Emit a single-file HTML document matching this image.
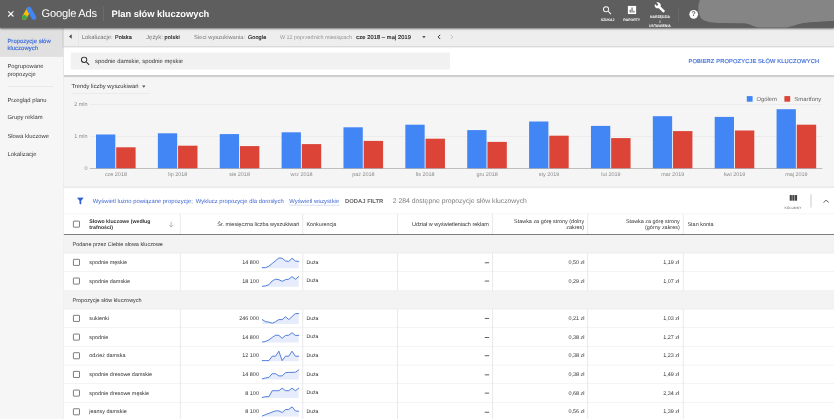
<!DOCTYPE html><html lang="pl"><head><meta charset="utf-8"><title>Plan słów kluczowych</title><style>
*{box-sizing:border-box;margin:0;padding:0}
html,body{width:834px;height:419px;overflow:hidden;background:#f1f1f1}
body{text-rendering:geometricPrecision;font-family:"Liberation Sans",sans-serif;color:#3c3c3c}
#w{position:absolute;left:0;top:0;width:1920px;height:965px;transform:scale(0.434375);transform-origin:0 0;background:#f1f1f1;overflow:hidden}
.a{position:absolute;white-space:nowrap}
.t{position:absolute;white-space:nowrap;line-height:1;transform:translateY(-50%)}
.r{text-align:right}
#hdr{left:0;top:0;width:1920px;height:64px;background:#5e5e5e;box-shadow:0 2px 4px rgba(0,0,0,.5)}
.w{color:#fff}
.lbl{font-size:8px;font-weight:bold;color:#fff;text-align:center;transform:translate(-50%,-50%);letter-spacing:0}
#side{left:0;top:64px;width:146px;height:901px;background:#f6f6f6;border-right:1.500px solid #e6e6e6}
.si{font-size:13.5px;color:#3c3c3c;line-height:17px;left:17px;position:absolute;white-space:nowrap}
#top{left:146px;top:64px;width:1774px;height:43px;background:#eeeeee;box-shadow:0 1px 3px rgba(0,0,0,.25)}
.g{color:#757575}
.d{color:#222}
.card{background:#fff}
.vl{position:absolute;width:1px;background:#e0e0e0}
.hl{position:absolute;height:1px;background:#e6e6e6}
.cb{position:absolute;width:16px;height:16px;border:2px solid #6a6a6a;border-radius:2px;background:#fff}
.row{font-size:12.5px;color:#333}
.hd{font-size:12.5px;color:#333}
.m{-webkit-text-stroke:0.35px currentColor}
</style></head><body><div id="w">
<div id="side" class="a">
<div class="a" style="left:0;top:0;width:146px;height:66.53px;background:#e0e0e0"></div>
<div class="si" style="top:21.9px;color:#3c6ddc;font-size:13.6px;letter-spacing:0.1px;-webkit-text-stroke:0.35px #3c6ddc">Propozycje słów</div>
<div class="si" style="top:38.9px;color:#3c6ddc;font-size:13.6px;letter-spacing:0.1px;-webkit-text-stroke:0.35px #3c6ddc">kluczowych</div>
<div class="si" style="top:80.4px;color:#3c3c3c">Pogrupowane</div>
<div class="si" style="top:96.5px;color:#3c3c3c">propozycje</div>
<div class="hl" style="left:18px;top:134px;width:104px;height:2px;background:#e6e6e6"></div>
<div class="si" style="top:156.6px;color:#3c3c3c">Przegląd planu</div>
<div class="si" style="top:197.8px;color:#3c3c3c">Grupy reklam</div>
<div class="si" style="top:239.7px;color:#3c3c3c">Słowa kluczowe</div>
<div class="si" style="top:280.9px;color:#3c3c3c">Lokalizacje</div>
</div>
<div class="a card" style="left:147px;top:107px;width:1773px;height:67px;box-shadow:0 1px 2px rgba(0,0,0,.2)"></div>
<div class="a" style="left:147px;top:174px;width:1773px;height:2px;background:#ababab"></div>
<div class="a" style="left:163.45px;top:120.86px;width:872.52px;height:39.36999999999999px;background:#f1f1f1;border-radius:2px"></div>
<svg class="a" style="left:183.33px;top:127.16px" width="27" height="27" viewBox="0 0 24 24"><path fill="#2a2a2a" d="M15.5 14h-.79l-.28-.27A6.47 6.47 0 0 0 16 9.5 6.5 6.5 0 1 0 9.5 16c1.61 0 3.09-.59 4.23-1.57l.27.28v.79l5 4.99L20.49 19l-4.99-5zm-6 0C7.01 14 5 11.99 5 9.500S7.010 5 9.500 5 14 7.010 14 9.500 11.990 14 9.500 14z"/></svg>
<div class="t" style="left:218.71px;top:140.43px;font-size:13.5px;color:#333">spodnie damskie, spodnie męskie</div>
<div class="t r" style="right:33.83999999999992px;top:140.43px;font-size:13.2px;letter-spacing:0.306px;-webkit-text-stroke:0.35px #3c6ddc;color:#3c6ddc">POBIERZ PROPOZYCJE SŁÓW KLUCZOWYCH</div>
<div class="a" style="left:147px;top:177.96px;width:1773px;height:252.54px;background:#f5f5f5;box-shadow:0 1px 1.500px rgba(0,0,0,.12)"></div>
<div class="t" style="left:164.6px;top:198.45px;font-size:13.45px;color:#333">Trendy liczby wyszukiwań</div>
<div class="a" style="left:327.47px;top:197.37px;width:0;height:0;border-left:4.5px solid transparent;border-right:4.5px solid transparent;border-top:5px solid #555"></div>
<div class="hl" style="left:164.6px;top:214.56px;width:180.72px;background:#dedede"></div>
<div class="a card" style="left:147px;top:432.58px;width:1773px;height:540px"></div>
<svg class="a" style="left:0;top:0" width="1920" height="964.6" viewBox="0 0 834 419">
<rect x="89.8" y="104.23" width="732.6" height="0.45" fill="#e3e3e3"/>
<rect x="89.8" y="136.38" width="732.6" height="0.45" fill="#e3e3e3"/>
<rect x="96.00" y="134.50" width="19.3" height="34.00" fill="#4285f4"/>
<rect x="116.20" y="147.30" width="19.4" height="21.20" fill="#db4437"/>
<rect x="157.87" y="133.30" width="19.3" height="35.20" fill="#4285f4"/>
<rect x="178.07" y="145.70" width="19.4" height="22.80" fill="#db4437"/>
<rect x="219.74" y="134.10" width="19.3" height="34.40" fill="#4285f4"/>
<rect x="239.94" y="146.10" width="19.4" height="22.40" fill="#db4437"/>
<rect x="281.61" y="132.30" width="19.3" height="36.20" fill="#4285f4"/>
<rect x="301.81" y="144.10" width="19.4" height="24.40" fill="#db4437"/>
<rect x="343.48" y="127.30" width="19.3" height="41.20" fill="#4285f4"/>
<rect x="363.68" y="140.90" width="19.4" height="27.60" fill="#db4437"/>
<rect x="405.35" y="124.70" width="19.3" height="43.80" fill="#4285f4"/>
<rect x="425.55" y="138.70" width="19.4" height="29.80" fill="#db4437"/>
<rect x="467.22" y="130.10" width="19.3" height="38.40" fill="#4285f4"/>
<rect x="487.42" y="141.90" width="19.4" height="26.60" fill="#db4437"/>
<rect x="529.09" y="121.50" width="19.3" height="47.00" fill="#4285f4"/>
<rect x="549.29" y="135.70" width="19.4" height="32.80" fill="#db4437"/>
<rect x="590.96" y="125.90" width="19.3" height="42.60" fill="#4285f4"/>
<rect x="611.16" y="138.10" width="19.4" height="30.40" fill="#db4437"/>
<rect x="652.83" y="116.20" width="19.3" height="52.30" fill="#4285f4"/>
<rect x="673.03" y="131.10" width="19.4" height="37.40" fill="#db4437"/>
<rect x="714.70" y="116.90" width="19.3" height="51.60" fill="#4285f4"/>
<rect x="734.90" y="130.50" width="19.4" height="38.00" fill="#db4437"/>
<rect x="776.57" y="109.20" width="19.3" height="59.30" fill="#4285f4"/>
<rect x="796.77" y="124.70" width="19.4" height="43.80" fill="#db4437"/>
<rect x="89.8" y="168.3" width="732.6" height="0.6" fill="#9a9a9a"/>
<rect x="746.8" y="96.1" width="5.8" height="5.6" fill="#4285f4"/>
<rect x="784.4" y="96.1" width="5.8" height="5.6" fill="#db4437"/>
<polygon points="262.30,268.20 262.30,267.60 265.61,267.60 268.92,266.10 272.23,263.50 275.54,260.70 278.85,258.00 282.15,258.20 285.46,261.00 288.77,261.40 292.08,258.20 295.39,261.10 298.70,261.40 298.70,268.20" fill="#e6ecfb"/>
<polyline points="262.30,267.60 265.61,267.60 268.92,266.10 272.23,263.50 275.54,260.70 278.85,258.00 282.15,258.20 285.46,261.00 288.77,261.40 292.08,258.20 295.39,261.10 298.70,261.40" fill="none" stroke="#3f72d4" stroke-width="0.9" stroke-linejoin="round" stroke-linecap="round"/>
<polygon points="262.30,286.70 262.30,286.30 265.61,285.90 268.92,284.70 272.23,280.90 275.54,279.20 278.85,279.70 282.15,281.30 285.46,279.70 288.77,279.20 292.08,276.60 295.39,279.20 298.70,276.60 298.70,286.70" fill="#e6ecfb"/>
<polyline points="262.30,286.30 265.61,285.90 268.92,284.70 272.23,280.90 275.54,279.20 278.85,279.70 282.15,281.30 285.46,279.70 288.77,279.20 292.08,276.60 295.39,279.20 298.70,276.60" fill="none" stroke="#3f72d4" stroke-width="0.9" stroke-linejoin="round" stroke-linecap="round"/>
<polygon points="262.30,324.00 262.30,319.60 265.61,321.70 268.92,322.10 272.23,323.30 275.54,321.70 278.85,319.60 282.15,319.60 285.46,316.80 288.77,319.60 292.08,316.50 295.39,313.60 298.70,313.60 298.70,324.00" fill="#e6ecfb"/>
<polyline points="262.30,319.60 265.61,321.70 268.92,322.10 272.23,323.30 275.54,321.70 278.85,319.60 282.15,319.60 285.46,316.80 288.77,319.60 292.08,316.50 295.39,313.60 298.70,313.60" fill="none" stroke="#3f72d4" stroke-width="0.9" stroke-linejoin="round" stroke-linecap="round"/>
<polygon points="262.30,342.40 262.30,342.00 265.61,341.40 268.92,339.90 272.23,337.40 275.54,335.20 278.85,335.40 282.15,338.30 285.46,335.50 288.77,335.20 292.08,332.70 295.39,335.40 298.70,335.40 298.70,342.40" fill="#e6ecfb"/>
<polyline points="262.30,342.00 265.61,341.40 268.92,339.90 272.23,337.40 275.54,335.20 278.85,335.40 282.15,338.30 285.46,335.50 288.77,335.20 292.08,332.70 295.39,335.40 298.70,335.40" fill="none" stroke="#3f72d4" stroke-width="0.9" stroke-linejoin="round" stroke-linecap="round"/>
<polygon points="262.30,361.20 262.30,360.60 265.61,360.60 268.92,360.60 272.23,356.20 275.54,356.20 278.85,351.20 282.15,360.60 285.46,356.20 288.77,356.20 292.08,351.20 295.39,356.20 298.70,356.20 298.70,361.20" fill="#e6ecfb"/>
<polyline points="262.30,360.60 265.61,360.60 268.92,360.60 272.23,356.20 275.54,356.20 278.85,351.20 282.15,360.60 285.46,356.20 288.77,356.20 292.08,351.20 295.39,356.20 298.70,356.20" fill="none" stroke="#3f72d4" stroke-width="0.9" stroke-linejoin="round" stroke-linecap="round"/>
<polygon points="262.30,379.60 262.30,378.90 265.61,378.00 268.92,377.40 272.23,373.70 275.54,373.70 278.85,375.90 282.15,375.90 285.46,372.70 288.77,372.40 292.08,372.40 295.39,372.20 298.70,369.90 298.70,379.60" fill="#e6ecfb"/>
<polyline points="262.30,378.90 265.61,378.00 268.92,377.40 272.23,373.70 275.54,373.70 278.85,375.90 282.15,375.90 285.46,372.70 288.77,372.40 292.08,372.40 295.39,372.20 298.70,369.90" fill="none" stroke="#3f72d4" stroke-width="0.9" stroke-linejoin="round" stroke-linecap="round"/>
<polygon points="262.30,397.90 262.30,397.50 265.61,396.70 268.92,396.70 272.23,390.70 275.54,390.70 278.85,390.70 282.15,388.20 285.46,390.70 288.77,390.70 292.08,388.20 295.39,390.70 298.70,388.20 298.70,397.90" fill="#e6ecfb"/>
<polyline points="262.30,397.50 265.61,396.70 268.92,396.70 272.23,390.70 275.54,390.70 278.85,390.70 282.15,388.20 285.46,390.70 288.77,390.70 292.08,388.20 295.39,390.70 298.70,388.20" fill="none" stroke="#3f72d4" stroke-width="0.9" stroke-linejoin="round" stroke-linecap="round"/>
<polygon points="262.30,416.60 262.30,416.00 265.61,414.60 268.92,413.40 272.23,412.10 275.54,410.90 278.85,410.90 282.15,412.50 285.46,409.60 288.77,409.40 292.08,406.90 295.39,410.90 298.70,411.30 298.70,416.60" fill="#e6ecfb"/>
<polyline points="262.30,416.00 265.61,414.60 268.92,413.40 272.23,412.10 275.54,410.90 278.85,410.90 282.15,412.50 285.46,409.60 288.77,409.40 292.08,406.90 295.39,410.90 298.70,411.30" fill="none" stroke="#3f72d4" stroke-width="0.9" stroke-linejoin="round" stroke-linecap="round"/>
</svg>
<div class="t r" style="right:1718.33px;top:240.35px;font-size:12.6px;color:#8c8c8c">2 mln</div>
<div class="t r" style="right:1718.33px;top:314.71px;font-size:12.6px;color:#8c8c8c">1 mln</div>
<div class="t r" style="right:1718.33px;top:387.91px;font-size:12.6px;color:#8c8c8c">0</div>
<div class="t" style="left:266.82px;top:400.58px;font-size:12.5px;color:#8a8a8a;transform:translate(-50%,-50%)">cze 2018</div>
<div class="t" style="left:409.25px;top:400.58px;font-size:12.5px;color:#8a8a8a;transform:translate(-50%,-50%)">lip 2018</div>
<div class="t" style="left:551.69px;top:400.58px;font-size:12.5px;color:#8a8a8a;transform:translate(-50%,-50%)">sie 2018</div>
<div class="t" style="left:694.12px;top:400.58px;font-size:12.5px;color:#8a8a8a;transform:translate(-50%,-50%)">wrz 2018</div>
<div class="t" style="left:836.56px;top:400.58px;font-size:12.5px;color:#8a8a8a;transform:translate(-50%,-50%)">paź 2018</div>
<div class="t" style="left:978.99px;top:400.58px;font-size:12.5px;color:#8a8a8a;transform:translate(-50%,-50%)">lis 2018</div>
<div class="t" style="left:1121.43px;top:400.58px;font-size:12.5px;color:#8a8a8a;transform:translate(-50%,-50%)">gru 2018</div>
<div class="t" style="left:1263.86px;top:400.58px;font-size:12.5px;color:#8a8a8a;transform:translate(-50%,-50%)">sty 2019</div>
<div class="t" style="left:1406.3px;top:400.58px;font-size:12.5px;color:#8a8a8a;transform:translate(-50%,-50%)">lut 2019</div>
<div class="t" style="left:1548.73px;top:400.58px;font-size:12.5px;color:#8a8a8a;transform:translate(-50%,-50%)">mar 2019</div>
<div class="t" style="left:1691.17px;top:400.58px;font-size:12.5px;color:#8a8a8a;transform:translate(-50%,-50%)">kwi 2019</div>
<div class="t" style="left:1833.6px;top:400.58px;font-size:12.5px;color:#8a8a8a;transform:translate(-50%,-50%)">maj 2019</div>
<div class="t" style="left:1741.35px;top:227.91px;font-size:13.5px;color:#666">Ogółem</div>
<div class="t" style="left:1828.6px;top:227.91px;font-size:13.6px;color:#666">Smartfony</div>
<svg class="a" style="left:175.86px;top:453.73px" width="18" height="18" viewBox="0 0 18 18"><path fill="#2f5fd2" d="M1 0.500h16l-6 7.800v8.700l-4-2v-6.700z"/></svg>
<div class="t" style="left:213.64px;top:462.73px;font-size:13.5px;color:#4068d2">Wyświetl luźno powiązane propozycje;</div>
<div class="t" style="left:450.76px;top:462.73px;font-size:13.5px;color:#4068d2">Wyklucz propozycje dla dorosłych</div>
<div class="t" style="left:665.78px;top:462.73px;font-size:13.55px;color:#4068d2">Wyświetl wszystkie</div>
<div class="a" style="left:665.78px;top:471.73px;width:115.34000000000003px;height:0;border-top:1.5px dotted #4068d2"></div>
<div class="t" style="left:794.24px;top:462.73px;font-size:13.5px;font-weight:bold;color:#666">DODAJ FILTR</div>
<div class="t" style="left:904.29px;top:462.73px;font-size:15.7px;color:#7e7e7e">2 284 dostępne propozycje słów kluczowych</div>
<div class="a" style="left:1818.03px;top:449.1px;width:4.6px;height:13px;background:#444"></div>
<div class="a" style="left:1824.23px;top:449.1px;width:4.6px;height:13px;background:#444"></div>
<div class="a" style="left:1830.43px;top:449.1px;width:4.6px;height:13px;background:#444"></div>
<div class="t" style="left:1825.61px;top:478.39px;font-size:7.9px;color:#666;transform:translate(-50%,-50%)">KOLUMNY</div>
<div class="vl" style="left:1866px;top:446.62px;height:31.310000000000002px;background:#c4c4c4;width:2px"></div>
<svg class="a" style="left:1893.58px;top:458.42px" width="16" height="10" viewBox="0 0 16 10"><path d="M2 8.500l6-6 6 6" fill="none" stroke="#555" stroke-width="2.200"/></svg>
<div class="hl" style="left:147px;top:491.74px;width:1773px;background:#e8e8e8"></div>
<div class="a" style="left:147px;top:539px;width:1773px;height:2px;background:#6a6a6a;z-index:3"></div>
<div class="vl" style="left:414px;top:492.74px;height:473.26px;width:2px;background:#e6e6ea"></div>
<div class="vl" style="left:696px;top:492.74px;height:473.26px;width:2px;background:#e6e6ea"></div>
<div class="vl" style="left:914px;top:492.74px;height:473.26px;width:2px;background:#e6e6ea"></div>
<div class="vl" style="left:1133px;top:492.74px;height:473.26px;width:2px;background:#e6e6ea"></div>
<div class="vl" style="left:1352px;top:492.74px;height:473.26px;width:2px;background:#e6e6ea"></div>
<div class="vl" style="left:1572px;top:492.74px;height:473.26px;width:2px;background:#e6e6ea"></div>
<div class="cb" style="left:168.35px;top:508.37px"></div>
<div class="t" style="left:205.58px;top:509.24px;font-size:12px;font-weight:bold;color:#333">Słowo kluczowe (według</div>
<div class="t" style="left:205.58px;top:522.59px;font-size:12px;font-weight:bold;color:#333">trafności)</div>
<svg class="a" style="left:387.36px;top:508.83000000000004px" width="14" height="16" viewBox="0 0 14 16"><path d="M7 1.500v12M2 8.500l5 5.200 5-5.200" fill="none" stroke="#9a9a9a" stroke-width="1.500"/></svg>
<div class="t r hd" style="right:1230.73px;top:516.6px;font-size:12.65px">Śr. miesięczna liczba wyszukiwań</div>
<div class="t hd" style="left:705.38px;top:516.6px;font-size:12.4px">Konkurencja</div>
<div class="t r hd" style="right:794.47px;top:516.6px;font-size:12.65px">Udział w wyświetleniach reklam</div>
<div class="t r hd" style="right:575.31px;top:509.01px">Stawka za górę strony (dolny</div>
<div class="t r hd" style="right:575.31px;top:522.59px">zakres)</div>
<div class="t r hd" style="right:355.22px;top:509.01px">Stawka za górę strony</div>
<div class="t r hd" style="right:355.22px;top:522.59px">(górny zakres)</div>
<div class="t hd" style="left:1582.73px;top:516.6px">Stan konta</div>
<div class="a" style="left:147px;top:539.5px;width:1773px;height:43px;background:#f3f3f3"></div>
<div class="t row" style="left:167.14px;top:562.5px;font-size:12.6px;color:#333">Podane przez Ciebie słowa kluczowe</div>
<div class="hl" style="left:147px;top:582.0px;width:1773px"></div>
<div class="cb" style="left:168.35px;top:596.0px"></div>
<div class="t row" style="left:205.58px;top:604.0px">spodnie męskie</div>
<div class="t r row" style="right:1323.97px;top:604.0px">14 800</div>
<div class="t row" style="left:705.38px;top:604.0px;font-size:11.9px">Duża</div>
<div class="a" style="left:1116.32px;top:604px;width:9.900000000000091px;height:2px;background:#4a4a4a"></div>
<div class="t r row" style="right:574.3900000000001px;top:604.0px">0,50 zł</div>
<div class="t r row" style="right:356.3699999999999px;top:604.0px">1,19 zł</div>
<div class="hl" style="left:147px;top:625.0px;width:1773px"></div>
<div class="cb" style="left:168.35px;top:639.0px"></div>
<div class="t row" style="left:205.58px;top:647.0px">spodnie damskie</div>
<div class="t r row" style="right:1323.97px;top:647.0px">18 100</div>
<div class="t row" style="left:705.38px;top:647.0px;font-size:11.9px">Duża</div>
<div class="a" style="left:1116.32px;top:646px;width:9.900000000000091px;height:2px;background:#4a4a4a"></div>
<div class="t r row" style="right:574.3900000000001px;top:647.0px">0,29 zł</div>
<div class="t r row" style="right:356.3699999999999px;top:647.0px">1,07 zł</div>
<div class="hl" style="left:147px;top:668.0px;width:1773px"></div>
<div class="a" style="left:147px;top:668.5px;width:1773px;height:43px;background:#f3f3f3"></div>
<div class="t row" style="left:167.14px;top:691.5px;font-size:12.6px;color:#333">Propozycje słów kluczowych</div>
<div class="hl" style="left:147px;top:711.0px;width:1773px"></div>
<div class="cb" style="left:168.35px;top:725.0px"></div>
<div class="t row" style="left:205.58px;top:733.0px">sukienki</div>
<div class="t r row" style="right:1323.97px;top:733.0px">246 000</div>
<div class="t row" style="left:705.38px;top:733.0px;font-size:11.9px">Duża</div>
<div class="a" style="left:1116.32px;top:732px;width:9.900000000000091px;height:2px;background:#4a4a4a"></div>
<div class="t r row" style="right:574.3900000000001px;top:733.0px">0,21 zł</div>
<div class="t r row" style="right:356.3699999999999px;top:733.0px">1,03 zł</div>
<div class="hl" style="left:147px;top:754.0px;width:1773px"></div>
<div class="cb" style="left:168.35px;top:768.0px"></div>
<div class="t row" style="left:205.58px;top:776.0px">spodnie</div>
<div class="t r row" style="right:1323.97px;top:776.0px">14 800</div>
<div class="t row" style="left:705.38px;top:776.0px;font-size:11.9px">Duża</div>
<div class="a" style="left:1116.32px;top:776px;width:9.900000000000091px;height:2px;background:#4a4a4a"></div>
<div class="t r row" style="right:574.3900000000001px;top:776.0px">0,38 zł</div>
<div class="t r row" style="right:356.3699999999999px;top:776.0px">1,27 zł</div>
<div class="hl" style="left:147px;top:797.0px;width:1773px"></div>
<div class="cb" style="left:168.35px;top:811.0px"></div>
<div class="t row" style="left:205.58px;top:819.0px">odzież damska</div>
<div class="t r row" style="right:1323.97px;top:819.0px">12 100</div>
<div class="t row" style="left:705.38px;top:819.0px;font-size:11.9px">Duża</div>
<div class="a" style="left:1116.32px;top:818px;width:9.900000000000091px;height:2px;background:#4a4a4a"></div>
<div class="t r row" style="right:574.3900000000001px;top:819.0px">0,38 zł</div>
<div class="t r row" style="right:356.3699999999999px;top:819.0px">1,23 zł</div>
<div class="hl" style="left:147px;top:840.0px;width:1773px"></div>
<div class="cb" style="left:168.35px;top:854.0px"></div>
<div class="t row" style="left:205.58px;top:862.0px">spodnie dresowe damskie</div>
<div class="t r row" style="right:1323.97px;top:862.0px">14 800</div>
<div class="t row" style="left:705.38px;top:862.0px;font-size:11.9px">Duża</div>
<div class="a" style="left:1116.32px;top:862px;width:9.900000000000091px;height:2px;background:#4a4a4a"></div>
<div class="t r row" style="right:574.3900000000001px;top:862.0px">0,38 zł</div>
<div class="t r row" style="right:356.3699999999999px;top:862.0px">1,49 zł</div>
<div class="hl" style="left:147px;top:883.0px;width:1773px"></div>
<div class="cb" style="left:168.35px;top:897.0px"></div>
<div class="t row" style="left:205.58px;top:905.0px">spodnie dresowe męskie</div>
<div class="t r row" style="right:1323.97px;top:905.0px">8 100</div>
<div class="t row" style="left:705.38px;top:905.0px;font-size:11.9px">Duża</div>
<div class="a" style="left:1116.32px;top:904px;width:9.900000000000091px;height:2px;background:#4a4a4a"></div>
<div class="t r row" style="right:574.3900000000001px;top:905.0px">0,68 zł</div>
<div class="t r row" style="right:356.3699999999999px;top:905.0px">2,34 zł</div>
<div class="hl" style="left:147px;top:926.0px;width:1773px"></div>
<div class="cb" style="left:168.35px;top:940.0px"></div>
<div class="t row" style="left:205.58px;top:948.0px">jeansy damskie</div>
<div class="t r row" style="right:1323.97px;top:948.0px">8 100</div>
<div class="t row" style="left:705.38px;top:948.0px;font-size:11.9px">Duża</div>
<div class="a" style="left:1116.32px;top:948px;width:9.900000000000091px;height:2px;background:#4a4a4a"></div>
<div class="t r row" style="right:574.3900000000001px;top:948.0px">0,56 zł</div>
<div class="t r row" style="right:356.3699999999999px;top:948.0px">1,39 zł</div>
<div class="hl" style="left:147px;top:969.0px;width:1773px"></div>
<div id="top" class="a"></div>
<div class="a" style="left:159.03px;top:78.76px;width:0;height:0;border-top:5.500px solid transparent;border-bottom:5.500px solid transparent;border-right:6px solid #444"></div>
<div class="vl" style="left:180.03px;top:64px;height:43px;background:#dcdcdc"></div>
<div class="t g" style="left:188.32px;top:85.18px;font-size:13.6px">Lokalizacje:</div>
<div class="t d m" style="left:264.52px;top:85.18px;font-size:12.6px;letter-spacing:0.18px">Polska</div>
<div class="t g" style="left:336.35px;top:85.18px;font-size:13.7px">Język:</div>
<div class="t d m" style="left:378.94px;top:85.18px;font-size:12.6px;letter-spacing:0.5px">polski</div>
<div class="t g" style="left:446.85px;top:85.18px;font-size:13.3px">Sieci wyszukiwania:</div>
<div class="t d m" style="left:570.71px;top:85.18px;font-size:12.6px;letter-spacing:0.29px">Google</div>
<div class="t" style="left:644.6px;top:85.18px;font-size:12.45px;color:#959595">W 12 poprzednich miesiącach</div>
<div class="t" style="left:820.26px;top:85.18px;font-size:13px;letter-spacing:0.276px;-webkit-text-stroke:0.35px #222;color:#222">cze 2018 – maj 2019</div>
<div class="a" style="left:971.62px;top:83.18px;width:0;height:0;border-left:4.500px solid transparent;border-right:4.500px solid transparent;border-top:5px solid #555"></div>
<svg class="a" style="left:1006.34px;top:79.18px" width="10" height="12" viewBox="0 0 10 12"><path d="M7.500 1l-5 5 5 5" fill="none" stroke="#3a3a3a" stroke-width="2.300"/></svg>
<svg class="a" style="left:1034.88px;top:79.18px" width="10" height="12" viewBox="0 0 10 12"><path d="M2.500 1l5 5-5 5" fill="none" stroke="#c0c0c0" stroke-width="2.300"/></svg>
<div id="hdr" class="a"></div>
<svg class="a" style="left:18.21px;top:25.35px" width="14" height="14" viewBox="0 0 14 14"><path d="M1 1l12 12M13 1l-12 12" stroke="#fff" stroke-width="2.500" fill="none"/></svg>
<svg class="a" style="left:49.27px;top:14.96px" width="36" height="32" viewBox="0 0 36 32"><path d="M13.200 3.200L2.300 22.200a5.600 5.600 0 0 0 9.700 5.600L22.900 8.800z" fill="#fbbc04"/><path d="M13.100 6.100a5.600 5.600 0 0 1 9.700-5.600l0 0 11 19a5.600 5.600 0 0 1-9.700 5.600z" fill="#4285f4" transform="translate(0,2.700)"/><circle cx="7.200" cy="25" r="5.600" fill="#34a853"/></svg>
<div class="t w" style="left:95.77px;top:33.38px;font-size:25.6px;letter-spacing:-0.52px">Google Ads</div>
<div class="vl" style="left:238.04px;top:14.96px;height:33.39px;background:#7d7d7d"></div>
<div class="t w" style="left:256.69px;top:32.69px;font-size:21.45px;font-weight:bold">Plan słów kluczowych</div>
<svg class="a" style="left:1385.29px;top:11.36px" width="26" height="26" viewBox="0 0 24 24"><path fill="#fff" d="M15.500 14h-.79l-.28-.27A6.470 6.470 0 0 0 16 9.500 6.500 6.500 0 1 0 9.500 16c1.610 0 3.090-.59 4.230-1.570l.27.280v.79l5 4.990L20.490 19l-4.990-5zm-6 0C7.010 14 5 11.990 5 9.500S7.010 5 9.500 5 14 7.010 14 9.500 11.990 14 9.500 14z"/></svg>
<div class="t lbl" style="left:1398.79px;top:46.27px">SZUKAJ</div>
<svg class="a" style="left:1444.73px;top:12.79px" width="20" height="20" viewBox="0 0 20 20"><rect width="20" height="20" rx="1.500" fill="#fff"/><path d="M4.500 15.500v-6h2.500v6zM8.800 15.500v-11h2.500v11zM13.100 15.500v-4h2.500v4z" fill="#5e5e5e"/></svg>
<div class="t lbl" style="left:1454.27px;top:46.04px">RAPORTY</div>
<svg class="a" style="left:1505.96px;top:4.039999999999999px" width="26" height="26" viewBox="0 0 24 24"><path fill="#fff" d="M22.700 19l-9.100-9.100c.9-2.300.4-5-1.500-6.900-2-2-5-2.400-7.400-1.300L9 6 6 9 1.600 4.700C.4 7.100.9 10.100 2.900 12.100c1.900 1.900 4.600 2.400 6.900 1.500l9.100 9.100c.4.400 1 .4 1.400 0l2.300-2.300c.5-.4.500-1.100.1-1.400z"/></svg>
<div class="t lbl" style="left:1519.42px;top:39.83px">NARZĘDZIA</div>
<div class="t lbl" style="left:1519.42px;top:50.42px">I</div>
<div class="t lbl" style="left:1519.42px;top:60.78px;font-size:8.100px">USTAWIENIA</div>
<div class="vl" style="left:1560.86px;top:16.58px;height:33.15px;background:#7a7a7a"></div>
<div class="a" style="left:1586.55px;top:22.689999999999998px;width:20px;height:20px;border-radius:50%;background:#fff;color:#5e5e5e;font-weight:bold;font-size:16px;line-height:20px;text-align:center">?</div>
<svg class="a" style="left:0;top:0" width="1920" height="964.6" viewBox="0 0 834 419">
<defs><filter id="bl" x="-5%" y="-20%" width="110%" height="140%"><feGaussianBlur stdDeviation="0.7"/></filter></defs>
<path filter="url(#bl)" fill="#858585" d="M701 -3 C698.500 3 697.500 8 699 13 C700 17.500 701.500 19.500 704.500 20.500 C709 22.500 716 23 724 23 L744 23.200 C750 23.500 753 27 760 27.600 L780 27.600 C788 27.600 792 26.500 797 24.500 C805 22 815 22.200 822 21.500 L840 20.500 L840 -3 Z"/>
</svg>
</div></body></html>
